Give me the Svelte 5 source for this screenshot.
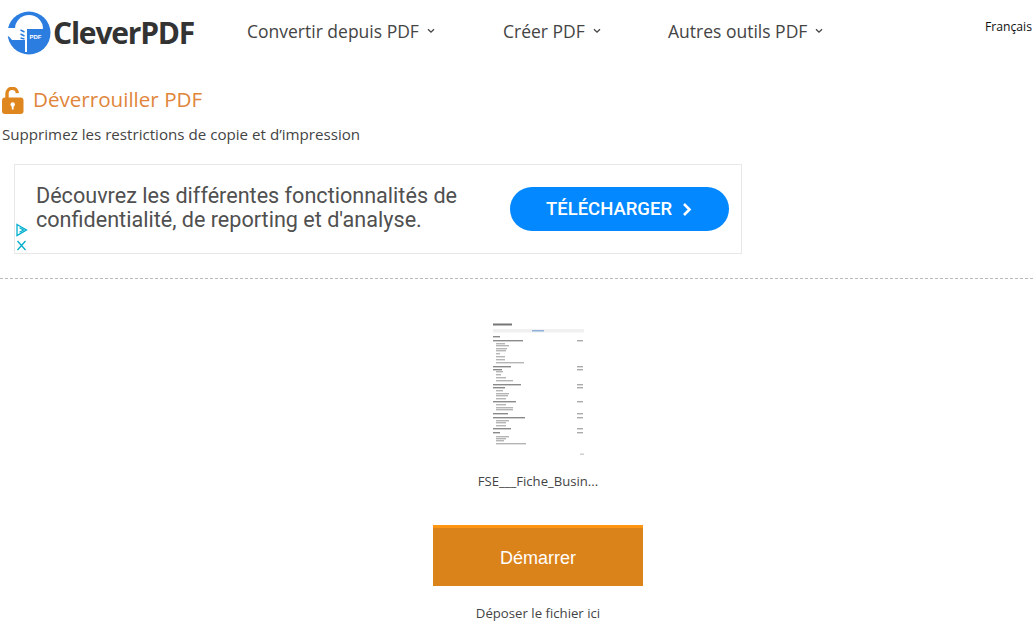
<script>
  const navItems = [
    { label: 'Convertir depuis PDF', width: 256 },
    { label: 'Créer PDF', width: 165 },
    { label: 'Autres outils PDF', width: 170 }
  ];

  // thumbnail rows: [x, y, width, has right column]
  const rows = [
    [0, 16, 7, 0], [0, 20, 30, 1], [3, 23, 9, 0], [3, 25, 13, 0], [3, 28, 11, 0], [3, 30, 10, 0],
    [3, 33, 4, 0], [3, 36, 9, 0], [3, 39, 9, 0], [3, 42, 28, 0], [0, 46, 18, 1], [0, 49, 9, 1],
    [3, 51, 7, 0], [3, 54, 5, 0], [3, 57, 10, 0], [3, 60, 17, 0], [0, 64, 28, 1], [0, 67, 12, 1],
    [3, 70, 7, 0], [3, 73, 13, 0], [3, 75, 12, 0], [3, 78, 10, 0], [0, 81, 23, 1], [3, 84, 10, 0],
    [3, 87, 17, 0], [3, 89, 17, 0], [0, 93, 15, 1], [0, 97, 32, 1], [3, 100, 13, 0], [3, 102, 10, 0],
    [3, 105, 10, 0], [0, 108, 18, 1], [0, 112, 7, 1], [3, 116, 13, 0], [3, 118, 10, 0], [3, 120, 8, 0],
    [3, 123, 30, 0]
  ];
</script>

<div class="page">
  <header class="topbar">
    <div class="logo">
      <svg width="45" height="44" viewBox="0 0 45 44">
        <circle cx="23" cy="22" r="21.5" fill="#2c7de0" />
        <path d="M9 18a14 14 0 0 1 28 0z" fill="#fff" />
        <path d="M0 17h21v24h-2V29H6l-3-3.5L0 25z" fill="#fff" />
        <path d="M14.5 19l4 2m-4 2l4 2m-4 2l4 1" stroke="#2c7de0" stroke-width="1.4" />
        <text x="23.5" y="28" class="logo-pdf">PDF</text>
      </svg>
      <span class="logo-text">CleverPDF</span>
    </div>
    <nav class="nav">
      {#each navItems as item}
        <a class="nav-item" style="width: {item.width}px">
          {item.label}
          <svg width="8" height="6" viewBox="0 0 8 6"><path d="M1 1.2l3 3 3-3" fill="none" stroke="#444" stroke-width="1.3" /></svg>
        </a>
      {/each}
    </nav>
    <span class="lang">Français</span>
  </header>

  <div class="title-row">
    <svg width="22" height="27" viewBox="0 0 22 27">
      <path d="M5 11V6.8a5.2 5.2 0 0 1 10.4-.6" fill="none" stroke="#e0861f" stroke-width="3.4" />
      <rect x="0" y="10.5" width="21.5" height="16.5" rx="3" fill="#e0861f" />
      <circle cx="10.7" cy="17.5" r="2.2" fill="#fff" />
      <rect x="9.8" y="18" width="1.8" height="4.5" fill="#fff" />
    </svg>
    <h1>Déverrouiller PDF</h1>
  </div>
  <p class="subtitle">Supprimez les restrictions de copie et d’impression</p>

  <aside class="ad">
    <p class="ad-text">Découvrez les différentes fonctionnalités de confidentialité, de reporting et d'analyse.</p>
    <div class="ad-btn">
      TÉLÉCHARGER
      <svg width="11" height="15" viewBox="0 0 11 15"><path d="M2 2l5.5 5.5L2 13" fill="none" stroke="#fff" stroke-width="2.6" /></svg>
    </div>
    <div class="ad-marks">
      <svg width="13" height="14" viewBox="0 0 13 14"><path d="M2 1.5l9.5 5.5-9.5 5.5zM4.5 4.8l4 2.2-4 2.2" fill="none" stroke="#00aecd" stroke-width="1.3" /></svg>
      <svg width="13" height="11" viewBox="0 0 13 11"><path d="M2.5 1l8 9m0-9l-8 9" fill="none" stroke="#00aecd" stroke-width="1.3" /></svg>
    </div>
  </aside>

  <hr class="divider" />

  <main class="drop">
    <svg class="thumb" width="91" height="140" viewBox="0 0 91 140">
      <rect x="0" y="3.5" width="19" height="2" fill="#777" />
      <rect x="0" y="9" width="91" height="3.5" fill="#f0f0f0" />
      <rect x="39" y="10" width="12" height="1.5" fill="#8fb2dc" />
      {#each rows as [x, y, w, right]}
        <rect {x} {y} width={w} height="1.4" fill={x ? '#b5b5b5' : '#8a8a8a'} />
        {#if right}
          <rect x="84" {y} width="6" height="1.4" fill="#aaa" />
        {/if}
      {/each}
      <rect x="87" y="133.5" width="4" height="1.4" fill="#ccc" />
    </svg>
    <div class="file-name">FSE___Fiche_Busin...</div>
    <button class="start">Démarrer</button>
    <div class="hint">Déposer le fichier ici</div>
  </main>
</div>

<style>
:global(body) {
  margin: 0;
  background: #fff;
}
.page {
  height: 625px;
  overflow: hidden;
  font-family: "Open Sans", "Noto Sans", sans-serif;
  color: #444;
}
.topbar {
  display: flex;
  height: 62px;
  padding-left: 6px;
}
.logo {
  display: flex;
  align-items: center;
  gap: 2px;
  width: 241px;
  padding-top: 3px;
}
.logo-pdf {
  font: bold 6px "Liberation Sans", sans-serif;
  fill: #fff;
}
.logo-text {
  font-family: "Open Sans", sans-serif;
  font-weight: 700;
  font-size: 30px;
  letter-spacing: -1.2px;
  color: #333;
}
.nav {
  display: flex;
  flex: 1;
  align-items: center;
}
.nav-item {
  display: flex;
  align-items: center;
  gap: 8px;
  font-size: 17.5px;
  font-weight: 500;
  color: #444;
}
.lang {
  padding: 18px 1px 0 0;
  font-size: 12.2px;
  color: #111;
}
.title-row {
  display: flex;
  align-items: center;
  gap: 10px;
  height: 26px;
  margin-top: 25px;
  padding-left: 2px;
}
.title-row h1 {
  margin: -2px 0 0 -1px;
  font-size: 20.6px;
  font-weight: 400;
  color: #e0853a;
}
.subtitle {
  margin: 11px 0 0 2px;
  font-size: 15.15px;
  line-height: 20px;
}
.ad {
  position: relative;
  display: flex;
  align-items: center;
  justify-content: space-between;
  box-sizing: border-box;
  width: 728px;
  height: 90px;
  margin: 20px 0 0 14px;
  padding: 0 12px 0 21px;
  border: 1px solid #e8e8e8;
}
.ad-text {
  width: 450px;
  margin: -2px 0 0;
  font-family: Roboto, sans-serif;
  font-size: 21.6px;
  line-height: 24px;
  color: #505050;
}
.ad-btn {
  display: flex;
  align-items: center;
  justify-content: center;
  gap: 10px;
  width: 219px;
  height: 44px;
  border-radius: 22px;
  background: #0388ff;
  color: #fff;
  font-family: Roboto, sans-serif;
  font-size: 18.5px;
  font-weight: 500;
}
.ad-marks {
  position: absolute;
  left: 0;
  bottom: 2px;
  display: flex;
  flex-direction: column;
  gap: 3px;
}
.divider {
  height: 0;
  margin: 24px 0 0;
  border: 0;
  border-top: 1px dashed #bbb;
}
.drop {
  display: flex;
  flex-direction: column;
  align-items: center;
  width: 1076px;
  padding-top: 41px;
}
.thumb {
  display: block;
  filter: blur(0.35px);
}
.file-name {
  margin-top: 12px;
  font-size: 13.1px;
  line-height: 18px;
}
.start {
  box-sizing: border-box;
  width: 210px;
  height: 61px;
  margin-top: 35px;
  padding-top: 3px;
  border: 0;
  border-top: 3px solid #ff9511;
  background: #db831b;
  color: #fff;
  font-family: "Liberation Sans", sans-serif;
  font-size: 18px;
}
.hint {
  margin-top: 18px;
  font-size: 13.2px;
  line-height: 18px;
}
</style>
